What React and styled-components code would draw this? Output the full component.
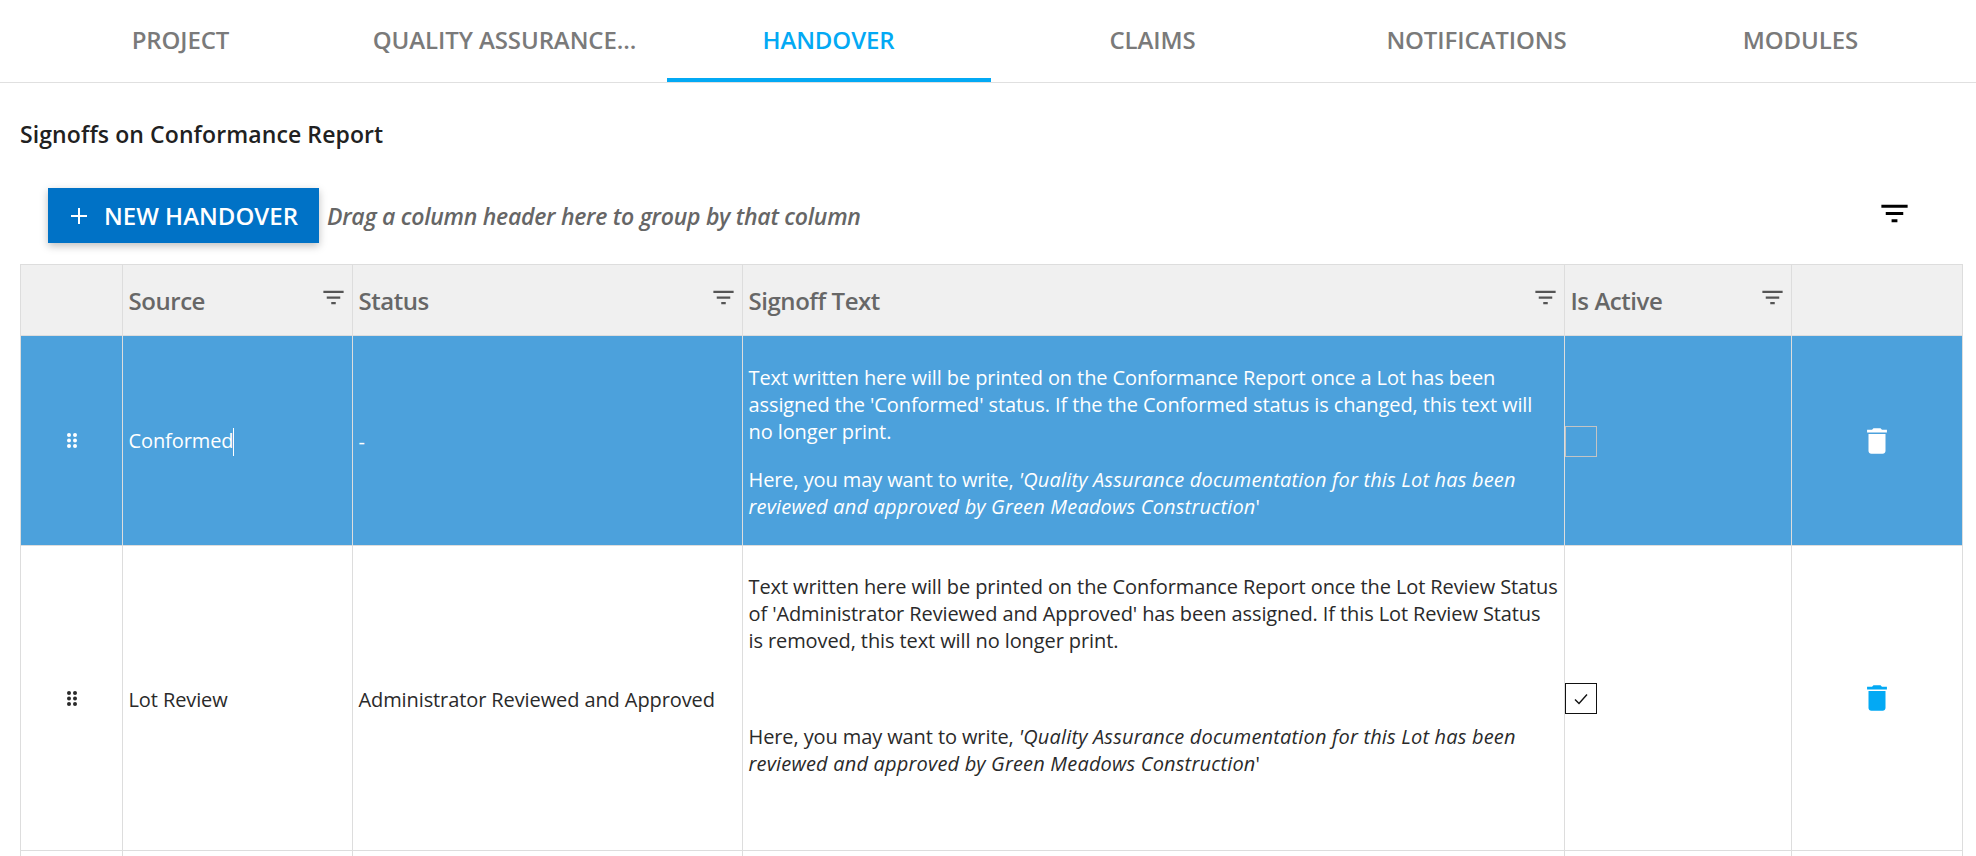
import React from 'react'
import styled, { createGlobalStyle } from 'styled-components'

const GlobalStyle = createGlobalStyle`
  html, body {
    margin: 0;
    height: 856px;
    overflow: hidden;
    background: #fff;
    font-family: "Open Sans", "Noto Sans", sans-serif;
  }
`

const tabs = ['PROJECT', 'QUALITY ASSURANCE...', 'HANDOVER', 'CLAIMS', 'NOTIFICATIONS', 'MODULES']

const TabBar = styled.div`
  display: flex;
  height: 82px;
  padding: 0 13px 0 19px;
  border-bottom: 1px solid #e0e0e0;
  box-sizing: content-box;
`
const Tab = styled.div`
  width: 324px;
  box-sizing: border-box;
  padding: 1px 1px 0 0;
  display: flex;
  align-items: center;
  justify-content: center;
  font-size: 24px;
  font-weight: 600;
  letter-spacing: -0.1px;
  color: ${(p) => (p.$active ? '#03a9f4' : '#7a7a7a')};
  border-bottom: 4px solid ${(p) => (p.$active ? '#03a9f4' : 'transparent')};
`
const Content = styled.div`
  padding: 0 14px 0 20px;
`
const Title = styled.h2`
  margin: 0;
  padding-top: 35px;
  font-size: 23px;
  line-height: 32px;
  font-weight: 600;
  letter-spacing: 0.1px;
  color: #212121;
`
const Toolbar = styled.div`
  display: flex;
  align-items: center;
  margin-top: 38px;
  padding-left: 28px;
  padding-right: 50px;
  height: 55px;
  margin-bottom: 21px;
`
const NewButton = styled.button`
  display: flex;
  align-items: center;
  gap: 16px;
  height: 55px;
  width: 271px;
  padding: 0 0 0 22px;
  border: 0;
  background: #0072c6;
  color: #fff;
  font-family: inherit;
  font-size: 24px;
  font-weight: 600;
  box-shadow: 0 3px 8px rgba(0, 0, 0, 0.25);
`
const Hint = styled.span`
  margin-left: 8px;
  flex: 1;
  font-size: 23px;
  font-weight: 600;
  font-style: italic;
  letter-spacing: -0.27px;
  color: #666;
`
const Grid = styled.table`
  width: 1942px;
  table-layout: fixed;
  border-collapse: collapse;
  border: 1px solid #ddd;
`
const HeadCell = styled.th`
  height: 70px;
  padding: 0 6px 0 5.5px;
  background: #f0f0f0;
  border: 1px solid #ddd;
  text-align: left;
  font-size: 24px;
  font-weight: 600;
  letter-spacing: -0.45px;
  color: #676767;
`
const HeadInner = styled.div`
  display: flex;
  align-items: center;
  justify-content: space-between;
`
const Row = styled.tr`
  background: ${(p) => (p.$selected ? '#4ca1dc' : '#fff')};
  color: ${(p) => (p.$selected ? '#fff' : '#2a2a2a')};
`
const Cell = styled.td`
  padding: 6.5px 6px 4px 5.5px;
  border: 1px solid #ddd;
  font-size: 20px;
  line-height: 27px;
  letter-spacing: -0.1px;
  vertical-align: middle;
`
const IconCell = styled(Cell)`
  padding: 1px 0 0;
  text-align: center;
`
const CheckCell = styled(Cell)`
  padding: 2px 0 0;
`
const Para = styled.p`
  margin: 21px 0;
  white-space: nowrap;
`
const Quote = styled.em`
  letter-spacing: 0.18px;
`
const Caret = styled.span`
  display: inline-block;
  width: 1px;
  height: 28px;
  vertical-align: middle;
  background: #fff;
`
const Check = styled.div`
  box-sizing: border-box;
  width: 32px;
  height: 31px;
  display: flex;
  align-items: center;
  justify-content: center;
  border: ${(p) => (p.$checked ? '1.5px solid #111' : '1px solid #c4c4c4')};
`
const IconSvg = styled.svg`
  display: block;
  flex: none;
  margin: ${(p) => (p.$center ? '0 auto' : '0')};
  fill: currentColor;
`
const TrashWrap = styled.span`
  display: block;
  color: ${(p) => (p.$selected ? '#fff' : '#03a9f4')};
`
const FilterWrap = styled.span`
  color: #555;
  margin-top: -5px;
  margin-right: -1px;
`
const ToolbarFilter = styled.span`
  color: #000;
  margin-top: -4px;
`

const FilterIcon = ({ size }) => (
  <IconSvg width={size} height={size} viewBox="0 0 24 24">
    <path d="M10 18h4v-2h-4v2zM3 6v2h18V6H3zm3 7h12v-2H6v2z" />
  </IconSvg>
)

const TrashIcon = () => (
  <IconSvg $center width="34" height="34" viewBox="0 0 24 24">
    <path d="M6 19c0 1.1.9 2 2 2h8c1.1 0 2-.9 2-2V7H6v12zM19 4h-3.5l-1-1h-5l-1 1H5v2h14V4z" />
  </IconSvg>
)

const DragDots = () => (
  <IconSvg $center width="10" height="15" viewBox="0 0 10 15">
    {[2, 7.5, 13].map((y) =>
      [2, 8].map((x) => <circle key={`${x}-${y}`} cx={x} cy={y} r="2" />)
    )}
  </IconSvg>
)

const PlusIcon = () => (
  <svg width="18" height="18" viewBox="0 0 18 18">
    <path d="M8 1h2v7h7v2h-7v7H8v-7H1V8h7z" fill="#fff" />
  </svg>
)

const TickIcon = () => (
  <svg width="14" height="12" viewBox="0 0 14 12">
    <path d="M1 6.5 5 10.5 13 1.5" fill="none" stroke="#111" strokeWidth="1.4" />
  </svg>
)

const Header = ({ children }) => (
  <HeadCell>
    <HeadInner>
      {children}
      <FilterWrap>
        <FilterIcon size={27} />
      </FilterWrap>
    </HeadInner>
  </HeadCell>
)

const SuggestedText = () => (
  <Para>
    Here, you may want to write, <Quote>'Quality Assurance documentation for this Lot has been<br />
    reviewed and approved by Green Meadows Construction</Quote>'
  </Para>
)

export default function App() {
  return (
    <>
      <GlobalStyle />
      <TabBar>
        {tabs.map((t) => (
          <Tab key={t} $active={t === 'HANDOVER'}>{t}</Tab>
        ))}
      </TabBar>
      <Content>
        <Title>Signoffs on Conformance Report</Title>
        <Toolbar>
          <NewButton>
            <PlusIcon />
            NEW HANDOVER
          </NewButton>
          <Hint>Drag a column header here to group by that column</Hint>
          <ToolbarFilter>
            <FilterIcon size={35} />
          </ToolbarFilter>
        </Toolbar>
        <Grid>
          <colgroup>
            <col width="102" />
            <col width="230" />
            <col width="390" />
            <col width="822" />
            <col width="227" />
            <col width="171" />
          </colgroup>
          <thead>
            <tr>
              <HeadCell />
              <Header>Source</Header>
              <Header>Status</Header>
              <Header>Signoff Text</Header>
              <Header>Is Active</Header>
              <HeadCell />
            </tr>
          </thead>
          <tbody>
            <Row $selected>
              <IconCell><DragDots /></IconCell>
              <Cell>Conformed<Caret /></Cell>
              <Cell>-</Cell>
              <Cell>
                <Para>
                  Text written here will be printed on the Conformance Report once a Lot has been<br />
                  assigned the 'Conformed' status. If the the Conformed status is changed, this text will<br />
                  no longer print.
                </Para>
                <SuggestedText />
              </Cell>
              <CheckCell><Check /></CheckCell>
              <IconCell><TrashWrap $selected><TrashIcon /></TrashWrap></IconCell>
            </Row>
            <Row>
              <IconCell><DragDots /></IconCell>
              <Cell>Lot Review</Cell>
              <Cell>Administrator Reviewed and Approved</Cell>
              <Cell>
                <Para>
                  Text written here will be printed on the Conformance Report once the Lot Review Status<br />
                  of 'Administrator Reviewed and Approved' has been assigned. If this Lot Review Status<br />
                  is removed, this text will no longer print.
                </Para>
                <Para>&nbsp;</Para>
                <SuggestedText />
                <Para>&nbsp;</Para>
              </Cell>
              <CheckCell><Check $checked><TickIcon /></Check></CheckCell>
              <IconCell><TrashWrap><TrashIcon /></TrashWrap></IconCell>
            </Row>
            <Row>
              <Cell>&nbsp;</Cell>
              <Cell />
              <Cell />
              <Cell />
              <Cell />
              <Cell />
            </Row>
          </tbody>
        </Grid>
      </Content>
    </>
  )
}
